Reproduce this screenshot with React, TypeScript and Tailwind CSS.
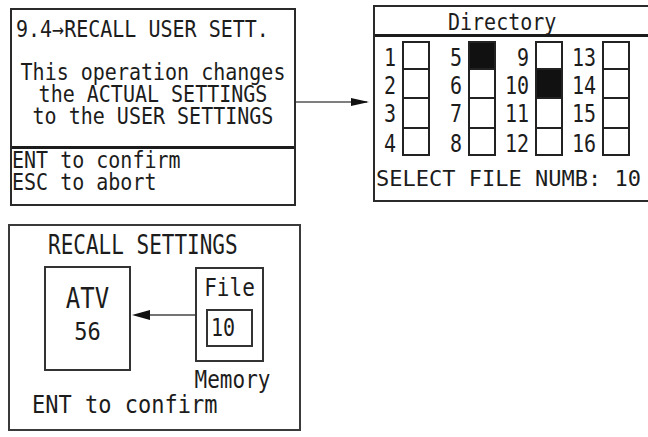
const mono = { fontFamily: '"DejaVu Sans Mono", "Liberation Mono", monospace' };

function Line({ children, className = '' }: { children: React.ReactNode; className?: string }) {
  return <div className={`h-[22px] leading-[22px] whitespace-pre ${className}`}>{children}</div>;
}

function ArrowRight({ width, height, y }: { width: number; height: number; y: number }) {
  return (
    <svg width={width} height={height} className="block">
      <line x1={0} y1={y} x2={width - 6} y2={y} stroke="#555" strokeWidth={1.3} />
      <polygon points={`${width - 22},${y - 4} ${width - 4},${y} ${width - 22},${y + 4}`} fill="#111" />
    </svg>
  );
}

function ArrowLeft({ width, height, y }: { width: number; height: number; y: number }) {
  return (
    <svg width={width} height={height} className="block shrink-0">
      <line x1={4} y1={y} x2={width} y2={y} stroke="#444" strokeWidth={1.3} />
      <polygon points={`1,${y} 19,${y - 5} 19,${y + 5}`} fill="#111" />
    </svg>
  );
}

const rows = [27, 29, 30, 27];

function Column({ labels, filled, labelW }: { labels: string[]; filled: number; labelW: number }) {
  return (
    <div className="flex shrink-0">
      <div className="flex flex-col pt-[2px] pr-[6px] text-right" style={{ width: labelW }}>
        {labels.map((l, i) => (
          <div
            key={l}
            className="flex items-center justify-end text-[20px] scale-y-[1.2]"
            style={{ height: rows[i] }}
          >
            {l}
          </div>
        ))}
      </div>
      <div className="flex w-[28px] flex-col border-x-2 border-b-2 border-[#222]">
        {labels.map((l, i) => (
          <div
            key={l}
            className={`border-t-2 border-[#222] ${i === filled ? 'bg-[#111]' : 'bg-white'}`}
            style={{ height: rows[i] }}
          />
        ))}
      </div>
    </div>
  );
}

export default function App() {
  return (
    <div className="h-[437px] w-[648px] overflow-hidden bg-white text-[#1c1c1c]" style={mono}>
      <div className="flex items-start pt-[5px]">
        {/* left panel */}
        <div className="ml-[10px] mt-[3px] flex h-[198px] w-[286px] shrink-0 flex-col border-2 border-[#2a2a2a]">
          <div className="h-[136px]">
            <Line className="mt-[8px] pl-[4px] text-[20px] scale-y-[1.15]">9.4→RECALL USER SETT.</Line>
            <div className="mt-[21px] text-center text-[20px]">
              <Line className="scale-y-[1.15]">This operation changes</Line>
              <Line className="scale-y-[1.15]">the ACTUAL SETTINGS</Line>
              <Line className="scale-y-[1.15]">to the USER SETTINGS</Line>
            </div>
          </div>
          <div className="h-[3px] bg-[#1c1c1c]" />
          <div className="text-[20px]">
            <Line className="h-[21px] leading-[21px] scale-y-[1.15]">ENT to confirm</Line>
            <Line className="h-[21px] leading-[21px] scale-y-[1.15]">ESC to abort</Line>
          </div>
        </div>

        <div className="mt-[3px] shrink-0">
          <ArrowRight width={77} height={198} y={94} />
        </div>

        {/* directory panel */}
        <div className="flex h-[197px] w-[290px] shrink-0 flex-col border-2 border-r-0 border-[#2a2a2a]">
          <div className="h-[30px] border-b-[3px] border-[#1c1c1c]">
            <div className="pl-[73px] pt-[2px] text-[20px] leading-[26px] scale-y-[1.15]">Directory</div>
          </div>
          <div className="mt-[4px] flex">
            <Column labels={['1', '2', '3', '4']} filled={-1} labelW={27} />
            <Column labels={['5', '6', '7', '8']} filled={0} labelW={38} />
            <Column labels={['9', '10', '11', '12']} filled={1} labelW={39} />
            <Column labels={['13', '14', '15', '16']} filled={-1} labelW={39} />
          </div>
          <div className="mt-[11px] whitespace-pre pl-[1px] text-[22px] leading-[24px]">SELECT FILE NUMB: 10</div>
        </div>
      </div>

      {/* recall settings panel */}
      <div className="ml-[8px] mt-[18px] flex h-[207px] w-[293px] flex-col border-2 border-[#3a3a3a]">
        <Line className="mt-[8px] pl-[38px] text-[21px] scale-y-[1.25]">RECALL SETTINGS</Line>
        <div className="mt-[10px] flex items-start pl-[34px]">
          <div className="flex h-[105px] w-[87px] shrink-0 flex-col items-center border-2 border-[#333] pt-[16px]">
            <div className="h-[28px] text-[24px] leading-[28px] scale-y-[1.2]">ATV</div>
            <div className="mt-[6px] h-[28px] text-[22px] leading-[28px] scale-y-[1.15]">56</div>
          </div>
          <ArrowLeft width={64} height={105} y={49} />
          <div className="flex w-[69px] shrink-0 flex-col items-center">
            <div className="mt-[1px] flex h-[95px] w-[69px] flex-col items-center border-2 border-[#333]">
              <div className="mt-[7px] h-[24px] text-[21px] leading-[24px] scale-y-[1.2]">File</div>
              <div className="mt-[9px] flex h-[38px] w-[47px] items-center border-2 border-[#333] pl-[3px] text-[20px]">
                <span className="scale-y-[1.2]">10</span>
              </div>
            </div>
            <div className="mt-[6px] h-[24px] whitespace-pre pl-[6px] text-[21px] leading-[24px] scale-y-[1.2]">Memory</div>
          </div>
        </div>
        <Line className="mt-[2px] pl-[22px] text-[22px] scale-y-[1.15]">ENT to confirm</Line>
      </div>
    </div>
  );
}
